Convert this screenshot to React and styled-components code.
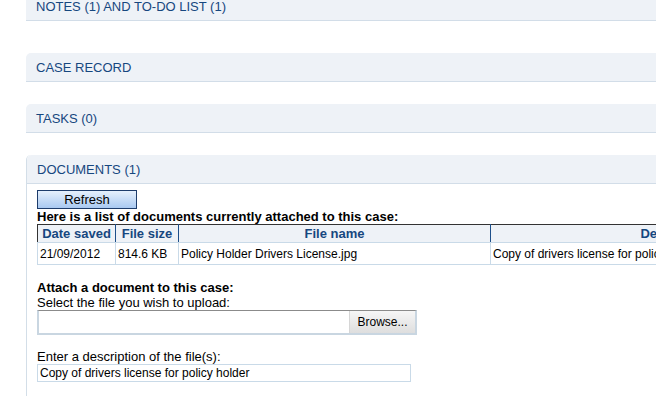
import React from "react";
import styled, { createGlobalStyle } from "styled-components";

const Global = createGlobalStyle`
  html, body { margin: 0; padding: 0; background: #fff; overflow: hidden; }
  body { font-family: "Liberation Sans", Arial, sans-serif; color: #000; }
`;

const Page = styled.div`
  width: 1000px;
  padding-left: 26px;
  margin-top: -8px;
`;

const Section = styled.section`
  margin-bottom: 22px;
  border-left: ${(p) => (p.$open ? "1px solid #d3dee8" : "none")};
  border-top-left-radius: 5px;
`;

const Header = styled.div`
  height: 29px;
  box-sizing: border-box;
  background: #eef2f7;
  border-bottom: 1px solid #d2dde8;
  border-top-left-radius: 5px;
  padding-left: 10px;
  display: flex;
  align-items: center;
  font-size: 13px;
  color: #16477f;
`;

const Spacer = styled.div`
  height: ${(p) => p.$h}px;
`;

const Body = styled.div`
  padding: 6px 0 14px 10px;
`;

const RefreshButton = styled.button`
  display: block;
  width: 100px;
  height: 19px;
  padding: 0;
  border: 1px solid #1d3c6b;
  background: linear-gradient(#e6f0fc, #a9c9f1);
  font-family: "Liberation Sans", Arial, sans-serif;
  font-size: 13px;
  color: #000;
  line-height: 17px;
`;

const BoldLine = styled.div`
  font-weight: bold;
  font-size: 13px;
  line-height: 15px;
`;

const Table = styled.table`
  border-collapse: collapse;
  table-layout: fixed;
  width: 824px;
  font-size: 12px;
  border-top: 1px solid #333;
`;

const Th = styled.th`
  height: 17px;
  padding: 0 2px;
  font-size: 13px;
  font-weight: bold;
  color: #16477f;
  text-align: center;
  background: #eef2f7;
  border-left: 1px solid ${(p) => (p.$first ? "#333" : "#1d4f8a")};
  border-bottom: 1px solid #c9dae8;
  white-space: nowrap;
  overflow: hidden;
`;

const Td = styled.td`
  height: 21px;
  padding: 0 2px;
  border-left: 1px solid #c9dae8;
  border-bottom: 1px solid #c9dae8;
  white-space: nowrap;
  overflow: hidden;
`;

const Label = styled.div`
  font-size: 13px;
  line-height: 15px;
  font-weight: ${(p) => (p.$bold ? "bold" : "normal")};
  margin-top: ${(p) => p.$mt || 0}px;
`;

const FileBox = styled.div`
  display: flex;
  width: 380px;
  height: 25px;
  box-sizing: border-box;
  border: 2px solid #c9d6e1;
  border-top: 1px solid #8b8b8b;
`;

const FileText = styled.div`
  flex: 1;
  background: #fff;
`;

const BrowseButton = styled.button`
  width: 66px;
  padding: 0;
  border: none;
  border-left: 1px solid #d6d6d6;
  background: linear-gradient(#f6f6f6, #dedede);
  font-family: "Liberation Sans", Arial, sans-serif;
  font-size: 12px;
  color: #000;
`;

const DescInput = styled.input`
  display: block;
  width: 374px;
  height: 18px;
  box-sizing: border-box;
  margin: 0;
  padding: 0 2px;
  border: 1px solid #c9dae8;
  font-family: "Liberation Sans", Arial, sans-serif;
  font-size: 12px;
  color: #000;
  outline: none;
`;

const cols = [78, 63, 312, 371];

export default function App() {
  return (
    <>
      <Global />
      <Page>
        <Section>
          <Header>NOTES (1) AND TO-DO LIST (1)</Header>
          <Spacer $h={10} />
        </Section>
        <Section>
          <Header>CASE RECORD</Header>
        </Section>
        <Section>
          <Header>TASKS (0)</Header>
        </Section>
        <Section $open>
          <Header>DOCUMENTS (1)</Header>
          <Body>
            <RefreshButton>Refresh</RefreshButton>
            <BoldLine>Here is a list of documents currently attached to this case:</BoldLine>
            <Table>
              <colgroup>
                {cols.map((w, i) => (
                  <col key={i} style={{ width: w }} />
                ))}
              </colgroup>
              <thead>
                <tr>
                  <Th $first>Date saved</Th>
                  <Th>File size</Th>
                  <Th>File name</Th>
                  <Th>Description</Th>
                </tr>
              </thead>
              <tbody>
                <tr>
                  <Td>21/09/2012</Td>
                  <Td>814.6 KB</Td>
                  <Td>Policy Holder Drivers License.jpg</Td>
                  <Td>Copy of drivers license for policy holder</Td>
                </tr>
              </tbody>
            </Table>
            <Label $bold $mt={15}>Attach a document to this case:</Label>
            <Label>Select the file you wish to upload:</Label>
            <FileBox>
              <FileText />
              <BrowseButton>Browse...</BrowseButton>
            </FileBox>
            <Label $mt={14}>Enter a description of the file(s):</Label>
            <DescInput defaultValue="Copy of drivers license for policy holder" />
          </Body>
        </Section>
      </Page>
    </>
  );
}
